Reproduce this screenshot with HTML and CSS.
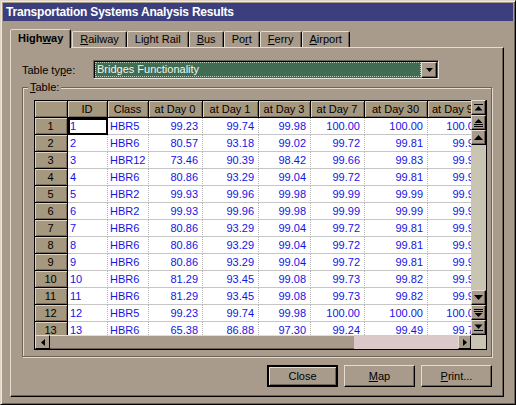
FILE: index.html
```html
<!DOCTYPE html>
<html lang="en">
<head>
  <meta charset="UTF-8">
  <title>Transportation Systems Analysis Results</title>
  <link rel="stylesheet" href="styles.css">
</head>
<body>
  <div class="window">
    <div class="titlebar">Transportation Systems Analysis Results</div>

    <div class="tabs">
      <div class="tab active">High<u>w</u>ay</div>
      <div class="tab"><u>R</u>ailway</div>
      <div class="tab">Light Rail</div>
      <div class="tab"><u>B</u>us</div>
      <div class="tab">Po<u>r</u>t</div>
      <div class="tab"><u>F</u>erry</div>
      <div class="tab"><u>A</u>irport</div>
    </div>

    <div class="panel">
      <div class="type-row">
        <label>Table ty<u>p</u>e:</label>
        <div class="combo">
          <span class="combo-text"><span class="focus">Bridges Functionality</span></span>
          <span class="combo-btn">
            <svg width="7" height="4" viewBox="0 0 7 4"><path d="M0 0H7L3.5 4Z" fill="#000"/></svg>
          </span>
        </div>
      </div>

      <fieldset class="group">
        <legend><u>T</u>able:</legend>
        <div class="grid">
          <div class="viewport">
            <table class="data">
              <thead>
                <tr>
                  <th class="c-row"></th>
                  <th class="c-id">ID</th>
                  <th class="c-class">Class</th>
                  <th class="c-d0">at Day 0</th>
                  <th class="c-d1">at Day 1</th>
                  <th class="c-d3">at Day 3</th>
                  <th class="c-d7">at Day 7</th>
                  <th class="c-d30">at Day 30</th>
                  <th class="c-d90">at Day 90</th>
                </tr>
              </thead>
              <tbody>
                <tr><th>1</th><td class="cur">1</td><td>HBR5</td><td class="num">99.23</td><td class="num">99.74</td><td class="num">99.98</td><td class="num">100.00</td><td class="num">100.00</td><td class="num">100.00</td></tr>
                <tr><th>2</th><td>2</td><td>HBR6</td><td class="num">80.57</td><td class="num">93.18</td><td class="num">99.02</td><td class="num">99.72</td><td class="num">99.81</td><td class="num">99.90</td></tr>
                <tr><th>3</th><td>3</td><td>HBR12</td><td class="num">73.46</td><td class="num">90.39</td><td class="num">98.42</td><td class="num">99.66</td><td class="num">99.83</td><td class="num">99.91</td></tr>
                <tr><th>4</th><td>4</td><td>HBR6</td><td class="num">80.86</td><td class="num">93.29</td><td class="num">99.04</td><td class="num">99.72</td><td class="num">99.81</td><td class="num">99.90</td></tr>
                <tr><th>5</th><td>5</td><td>HBR2</td><td class="num">99.93</td><td class="num">99.96</td><td class="num">99.98</td><td class="num">99.99</td><td class="num">99.99</td><td class="num">99.99</td></tr>
                <tr><th>6</th><td>6</td><td>HBR2</td><td class="num">99.93</td><td class="num">99.96</td><td class="num">99.98</td><td class="num">99.99</td><td class="num">99.99</td><td class="num">99.99</td></tr>
                <tr><th>7</th><td>7</td><td>HBR6</td><td class="num">80.86</td><td class="num">93.29</td><td class="num">99.04</td><td class="num">99.72</td><td class="num">99.81</td><td class="num">99.90</td></tr>
                <tr><th>8</th><td>8</td><td>HBR6</td><td class="num">80.86</td><td class="num">93.29</td><td class="num">99.04</td><td class="num">99.72</td><td class="num">99.81</td><td class="num">99.90</td></tr>
                <tr><th>9</th><td>9</td><td>HBR6</td><td class="num">80.86</td><td class="num">93.29</td><td class="num">99.04</td><td class="num">99.72</td><td class="num">99.81</td><td class="num">99.90</td></tr>
                <tr><th>10</th><td>10</td><td>HBR6</td><td class="num">81.29</td><td class="num">93.45</td><td class="num">99.08</td><td class="num">99.73</td><td class="num">99.82</td><td class="num">99.91</td></tr>
                <tr><th>11</th><td>11</td><td>HBR6</td><td class="num">81.29</td><td class="num">93.45</td><td class="num">99.08</td><td class="num">99.73</td><td class="num">99.82</td><td class="num">99.91</td></tr>
                <tr><th>12</th><td>12</td><td>HBR5</td><td class="num">99.23</td><td class="num">99.74</td><td class="num">99.98</td><td class="num">100.00</td><td class="num">100.00</td><td class="num">100.00</td></tr>
                <tr><th>13</th><td>13</td><td>HBR6</td><td class="num">65.38</td><td class="num">86.88</td><td class="num">97.30</td><td class="num">99.24</td><td class="num">99.49</td><td class="num">99.75</td></tr>
              </tbody>
            </table>
          </div>

          <div class="vscroll">
            <div class="sbtn">
              <svg width="9" height="7" viewBox="0 0 9 7"><rect width="9" height="1"/><path d="M4.5 2L8.5 6.5H0.5Z"/></svg>
            </div>
            <div class="sbtn">
              <svg width="9" height="8" viewBox="0 0 9 8"><path d="M4.5 0L8.5 4H0.5Z"/><rect y="5" width="9" height="1"/><rect y="7" width="9" height="1"/></svg>
            </div>
            <div class="sbtn">
              <svg width="9" height="5" viewBox="0 0 9 5"><path d="M4.5 0L9 5H0Z"/></svg>
            </div>
            <div class="strack"></div>
            <div class="sbtn">
              <svg width="9" height="5" viewBox="0 0 9 5"><path d="M0 0H9L4.5 5Z"/></svg>
            </div>
            <div class="sbtn">
              <svg width="9" height="8" viewBox="0 0 9 8"><rect width="9" height="1"/><rect y="2" width="9" height="1"/><path d="M0.5 4H8.5L4.5 8Z"/></svg>
            </div>
            <div class="sbtn">
              <svg width="9" height="7" viewBox="0 0 9 7"><path d="M0.5 0.5H8.5L4.5 5Z"/><rect y="6" width="9" height="1"/></svg>
            </div>
          </div>

          <div class="hscroll">
            <div class="hbtn left">
              <svg width="4" height="7" viewBox="0 0 4 7"><path d="M4 0V7L0 3.5Z"/></svg>
            </div>
            <div class="hthumb"></div>
            <div class="htrack"></div>
            <div class="hbtn right">
              <svg width="4" height="7" viewBox="0 0 4 7"><path d="M0 0V7L4 3.5Z"/></svg>
            </div>
          </div>
          <div class="corner"></div>
        </div>
      </fieldset>

      <div class="buttons">
        <button class="button default">Close</button>
        <button class="button"><u>M</u>ap</button>
        <button class="button"><u>P</u>rint...</button>
      </div>
    </div>
  </div>
</body>
</html>
```

FILE: styles.css
```css
body {
  margin: 0;
  font-family: "Liberation Sans", Arial, sans-serif;
  font-size: 11px;
  color: #000;
  background: #a89b8b;
}

.window {
  width: 516px;
  height: 405px;
  box-sizing: border-box;
  display: flex;
  flex-direction: column;
  padding: 2px;
  background: #a89b8b;
  border: 1px solid;
  border-color: #ddd5c8 #000 #000 #ddd5c8;
  box-shadow: inset 1px 1px #efe9de, inset -1px -1px #6c6258;
}

.titlebar {
  height: 18px;
  line-height: 18px;
  padding-left: 3px;
  background: #3c3f7e;
  color: #fff;
  font-weight: bold;
  font-size: 12px;
  letter-spacing: -0.2px;
  white-space: nowrap;
}

/* tab strip */
.tabs {
  display: flex;
  align-items: flex-end;
  height: 18px;
  margin: 8px 0 0 7px;
}

.tab {
  height: 15px;
  line-height: 15px;
  padding: 0 7px;
  border: 1px solid;
  border-bottom: none;
  border-color: #e4dccf #000 transparent #e4dccf;
  border-radius: 2px 2px 0 0;
  box-shadow: inset -1px 0 #6c6258;
  white-space: nowrap;
}

.tab.active {
  position: relative;
  z-index: 1;
  height: 18px;
  line-height: 17px;
  margin-bottom: -1px;
  margin-right: 1px;
  padding: 0 7px;
  font-weight: bold;
  background: #a89b8b;
}

.panel {
  flex: 1;
  margin: 0 9px 5px 7px;
  padding: 12px 11px 9px 11px;
  border: 1px solid;
  border-color: #e4dccf #000 #000 #e4dccf;
  box-shadow: inset -1px -1px #6c6258;
}

/* table type combo */
.type-row {
  display: flex;
  align-items: center;
  height: 19px;
}

.type-row label {
  width: 71px;
}

.combo {
  width: 346px;
  height: 19px;
  box-sizing: border-box;
  display: flex;
  align-items: center;
  padding: 1px;
  border: 1px solid;
  border-color: #6c6258 #ece6da #ece6da #6c6258;
  box-shadow: inset 1px 1px #000;
  background: #3f6c52;
}

.combo-text {
  flex: 1;
  height: 15px;
  padding: 1px 1px 0 1px;
  box-sizing: border-box;
}

.combo-text .focus {
  display: block;
  height: 13px;
  line-height: 13px;
  padding-left: 1px;
  outline: 1px dotted #b9d2c0;
  color: #f2f6f0;
}

.combo-btn {
  width: 16px;
  height: 16px;
  box-sizing: border-box;
  display: flex;
  align-items: center;
  justify-content: center;
  background: #a89b8b;
  border: 1px solid;
  border-color: #e4dccf #000 #000 #e4dccf;
  box-shadow: inset -1px -1px #6c6258;
}

/* group box */
.group {
  margin: 2px 0 0 0;
  padding: 6px 4px 6px 11px;
  border: 1px solid #6c6258;
  box-shadow: 1px 1px #e4dccf, inset 1px 1px #e4dccf;
}

.group legend {
  margin-left: -6px;
  padding: 0 2px;
  line-height: 13px;
  background: #a89b8b;
}

.grid {
  display: grid;
  grid-template-columns: 437px 16px;
  grid-template-rows: 235px 15px;
}

.viewport {
  overflow: hidden;
  background: #fff;
}

.data {
  table-layout: fixed;
  width: 451px;
  border-spacing: 0;
  white-space: nowrap;
}

.data th,
.data td {
  box-sizing: border-box;
  height: 17px;
  padding: 0 3px 0 2px;
  line-height: 16px;
  overflow: hidden;
}

.data th {
  font-weight: normal;
  text-align: center;
  background: #a6977f;
  border-right: 1px solid #000;
  border-bottom: 1px solid #000;
  box-shadow: inset 1px 1px #dcd2c2, inset -1px -1px #776a5a;
}

.data thead th {
  border-top: 1px solid #000;
}

.data th:first-child {
  border-left: 1px solid #000;
}

.data td {
  color: #1414e6;
  border-right: 1px dotted #b4b4b4;
  border-bottom: 1px solid #c6c6c6;
}

.data td.num {
  text-align: right;
  padding-right: 4px;
}

.data td.cur {
  outline: 2px solid #000;
  outline-offset: -2px;
}

.c-row { width: 34px; }
.c-id { width: 40px; }
.c-class { width: 41px; }
.c-d0 { width: 54px; }
.c-d1 { width: 56px; }
.c-d3 { width: 52px; }
.c-d7 { width: 54px; }
.c-d30 { width: 63px; }
.c-d90 { width: 57px; }

/* scrollbars */
.vscroll {
  display: flex;
  flex-direction: column;
  border-right: 1px solid #000;
  background: #c9c5b2;
}

.sbtn {
  height: 15px;
  box-sizing: border-box;
  display: flex;
  align-items: center;
  justify-content: center;
  background: #a89b8b;
  border: 1px solid;
  border-color: #e4dccf #000 #000 #e4dccf;
  box-shadow: inset -1px -1px #6c6258;
}

.strack {
  flex: 1;
}

.hscroll {
  display: flex;
  border-left: 1px solid #000;
  border-bottom: 1px solid #000;
  background: #dac9c8;
}

.hbtn {
  box-sizing: border-box;
  display: flex;
  align-items: center;
  justify-content: center;
  background: #a89b8b;
  border: 1px solid;
  border-color: #e4dccf #000 #000 #e4dccf;
}

.hbtn.left {
  width: 15px;
}

.hbtn.right {
  width: 13px;
}

.hthumb {
  width: 304px;
  box-sizing: border-box;
  background: #a89b8b;
  border-top: 1px solid #e4dccf;
  border-bottom: 1px solid #6c6258;
}

.htrack {
  flex: 1;
}

.corner {
  background: #c9c5b2;
  border-bottom: 1px solid #000;
  border-right: 1px solid #000;
}

/* bottom buttons */
.buttons {
  display: flex;
  justify-content: flex-end;
  gap: 6px;
  margin-top: 8px;
}

.button {
  width: 71px;
  height: 22px;
  padding: 0;
  font-family: inherit;
  font-size: 11px;
  color: #000;
  background: #a89b8b;
  border: 1px solid;
  border-color: #e4dccf #000 #000 #e4dccf;
  box-shadow: inset -1px -1px #6c6258;
}

.button.default {
  border: 2px solid #000;
  box-shadow: inset 1px 1px #e4dccf, inset -1px -1px #6c6258;
}
```
